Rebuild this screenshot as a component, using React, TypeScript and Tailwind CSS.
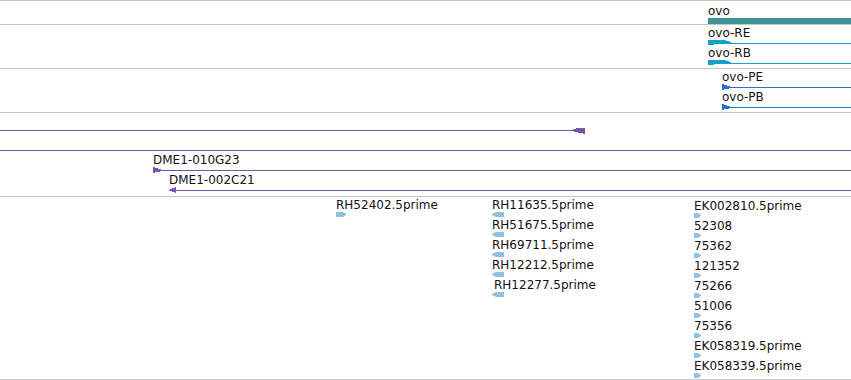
import type { ReactNode } from "react";

const TEAL = "#3d9494";
const CYAN = "#16a1c9";
const BLUE = "#2c6fd2";
const PURPLE = "#7656a6";
const EST = "#8fc1e3";

function Label({ text, className = "" }: { text: string; className?: string }) {
  return <div className={"whitespace-nowrap text-[12px] leading-[14px] text-[#111] " + className}>{text}</div>;
}

// transcript style glyph: thick block at the left, thin line out to the edge
function Transcript({ color }: { color: string }) {
  return (
    <svg className="block w-full h-[6px]" shapeRendering="crispEdges">
      <rect x={0} y={3} width="100%" height={1} fill={color} />
      <polygon points="0,0 16,0 23,2 23,3 0,5" fill={color} />
    </svg>
  );
}

function Pennant({ color }: { color: string }) {
  return (
    <svg className="block w-full h-[6px]" shapeRendering="crispEdges">
      <rect x={0} y={3} width="100%" height={1} fill={color} />
      <polygon points="0,0 9,3 9,4 0,6" fill={color} />
    </svg>
  );
}

function EstArrow({ left, big }: { left?: boolean; big?: boolean }) {
  if (left)
    return (
      <svg className="block w-[13px] h-[6px]">
        <polygon points="0,2 4,0 12,0 12,5 4,5 0,3" fill={EST} />
      </svg>
    );
  return (
    <svg className="block w-[11px] h-[6px]">
      <polygon points={big ? "0,0 7,0 10,2 10,3 7,5 0,5" : "0,0 4,0 7,2 7,3 4,5 0,5"} fill={EST} />
    </svg>
  );
}

function Track({ className, children }: { className: string; children: ReactNode }) {
  return <div className={"w-full border-t border-[#c6c6c6] overflow-hidden flex flex-col " + className}>{children}</div>;
}

const leftEsts = ["RH11635.5prime", "RH51675.5prime", "RH69711.5prime", "RH12212.5prime", "RH12277.5prime"];
const rightEsts = [
  "EK002810.5prime",
  "52308",
  "75362",
  "121352",
  "75266",
  "51006",
  "75356",
  "EK058319.5prime",
  "EK058339.5prime",
];

export default function App() {
  return (
    <div className="w-[851px] h-[380px] bg-white overflow-hidden font-['DejaVu_Sans',sans-serif]">
      {/* gene */}
      <Track className="h-[24px] pt-[3px] pl-[708px]">
        <Label text="ovo" className="leading-[12px]" />
        <div className="h-[6px] w-full bg-[#3d9494]" />
      </Track>

      {/* transcripts */}
      <Track className="h-[44px] pt-[1px] pl-[708px]">
        <Label text="ovo-RE" />
        <Transcript color={CYAN} />
        <Label text="ovo-RB" />
        <Transcript color={CYAN} />
      </Track>

      {/* proteins */}
      <Track className="h-[44px] pt-[1px] pl-[722px]">
        <Label text="ovo-PE" />
        <Pennant color={BLUE} />
        <Label text="ovo-PB" />
        <Pennant color={BLUE} />
      </Track>

      {/* clones */}
      <Track className="h-[84px]">
        <svg className="block w-full h-[40px] shrink-0" shapeRendering="crispEdges">
          <rect x={0} y={17} width={576} height={1} fill={PURPLE} />
          <polygon points="572,17 577,15 585,15 585,21 572,18" fill={PURPLE} />
          <rect x={0} y={37} width="100%" height={1} fill={PURPLE} />
        </svg>
        <div className="pl-[153px]">
          <Label text="DME1-010G23" />
          <Pennant color={PURPLE} />
        </div>
        <div className="pl-[169px]">
          <Label text="DME1-002C21" />
          <svg className="block w-full h-[6px]" shapeRendering="crispEdges">
            <rect x={0} y={3} width="100%" height={1} fill={PURPLE} />
            <polygon points="0,3 7,0 7,6" fill={PURPLE} />
          </svg>
        </div>
      </Track>

      {/* ESTs */}
      <Track className="h-[184px] border-b pt-[1px] pl-[336px] !flex-row">
        <div className="w-[156px] flex flex-col">
          <Label text="RH52402.5prime" />
          <EstArrow big />
        </div>
        <div className="w-[202px] flex flex-col">
          {leftEsts.map((t, i) => (
            <div key={t}>
              <Label text={t} className={i === 4 ? "ml-[2px]" : ""} />
              <EstArrow left />
            </div>
          ))}
        </div>
        <div className="flex flex-col pt-[1px]">
          {rightEsts.map((t) => (
            <div key={t}>
              <Label text={t} />
              <EstArrow />
            </div>
          ))}
        </div>
      </Track>
    </div>
  );
}
